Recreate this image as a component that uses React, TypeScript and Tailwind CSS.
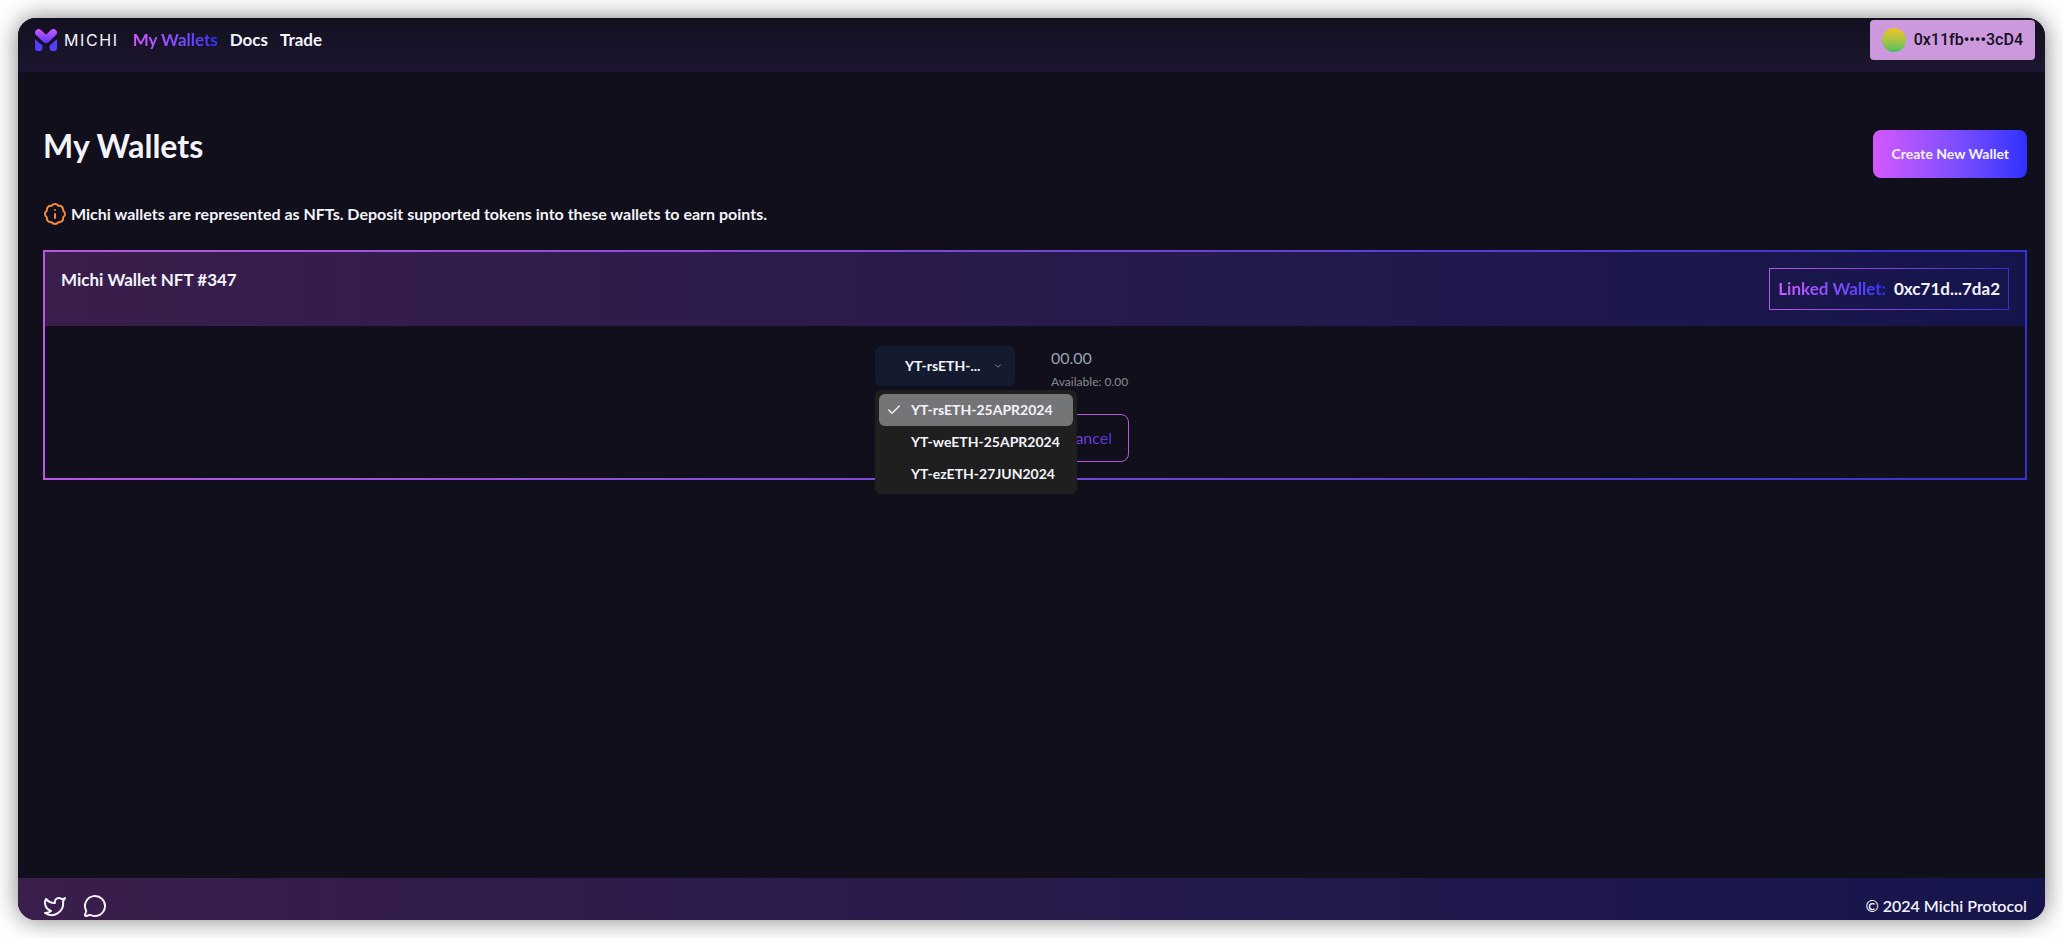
import React, { useState } from 'react';
import { BadgeInfo, Check, ChevronDown, MessageCircle, Twitter } from 'lucide-react';

interface Token {
  id: string;
  name: string;
}

const tokens: Token[] = [
  { id: 'rseth', name: 'YT-rsETH-25APR2024' },
  { id: 'weeth', name: 'YT-weETH-25APR2024' },
  { id: 'ezeth', name: 'YT-ezETH-27JUN2024' },
];

const shorten = (name: string) => `${name.slice(0, 9)}...`;

const gradientText = 'bg-linear-to-r from-[#d457ff] to-[#2d2fff] bg-clip-text text-transparent';

const Logo = () => (
  <svg width="22" height="22" viewBox="0 0 22 22" fill="none" aria-hidden="true">
    <defs>
      <linearGradient id="logo" x1="0" y1="0" x2="0" y2="22" gradientUnits="userSpaceOnUse">
        <stop stopColor="#d457ff" />
        <stop offset="0.65" stopColor="#5338ff" />
        <stop offset="1" stopColor="#5a45ff" />
      </linearGradient>
    </defs>
    <path d="M3.6 3.6 11 10.6l7.4-7" stroke="url(#logo)" strokeWidth="7" strokeLinecap="round" strokeLinejoin="round" />
    <path d="M0 10.2 7.4 16.6V18.4A3.6 3.6 0 0 1 0 18.4Z" fill="url(#logo)" />
    <path d="M22 10.2 14.6 16.6V18.4A3.6 3.6 0 0 0 22 18.4Z" fill="url(#logo)" />
  </svg>
);

const Header = () => (
  <header className="flex h-[54px] items-start justify-between bg-linear-to-b from-[#12111f] to-[#1d1530] pr-[10px] pl-[17px]">
    <div className="flex h-11 items-center">
      <a href="#" className="flex items-center gap-[7px]">
        <Logo />
        <span className="font-[Inter,sans-serif] text-base tracking-widest">MICHI</span>
      </a>
      <nav className="ml-[14px] flex gap-3 text-[17px] leading-6 font-bold">
        <a href="#" className={gradientText}>My Wallets</a>
        <a href="#">Docs</a>
        <a href="#">Trade</a>
      </nav>
    </div>
    <button className="mt-[2px] flex h-10 items-center gap-2 rounded-sm bg-[#cc99dd] px-3 font-[Roboto,sans-serif] text-base font-medium text-[#12101c]">
      <span className="size-6 rounded-full bg-linear-to-b from-[#f2c21a] to-[#3cc05a]" />
      0x11fb••••3cD4
    </button>
  </header>
);

const TokenSelect = () => {
  const [selected, setSelected] = useState('rseth');
  const [open, setOpen] = useState(true);

  return (
    <div className="relative w-[140px] text-sm font-bold">
      <select
        aria-label="Token"
        value={selected}
        onChange={e => setSelected(e.target.value)}
        className="h-10 w-full appearance-none rounded-md bg-[#151b2e] pl-[30px] outline-none"
      >
        {tokens.map(token => (
          <option key={token.id} value={token.id}>{shorten(token.name)}</option>
        ))}
      </select>
      <ChevronDown className="pointer-events-none absolute top-[15px] right-3 size-[10px] text-gray-400" />
      {open && (
        <ul className="absolute top-11 left-0 z-10 w-[202px] rounded-md bg-[#1f1f1f] p-1">
          {tokens.map(token => (
            <li key={token.id}>
              <button
                onClick={() => {
                  setSelected(token.id);
                  setOpen(false);
                }}
                className={`flex h-8 w-full items-center rounded-md whitespace-nowrap ${token.id === selected ? 'bg-[#747576]' : ''}`}
              >
                <span className="flex w-8 shrink-0 justify-center pr-[2px]">
                  {token.id === selected && <Check className="size-4" />}
                </span>
                {token.name}
              </button>
            </li>
          ))}
        </ul>
      )}
    </div>
  );
};

const WalletCard = () => (
  <section className="mt-6 border-2 [border-image:linear-gradient(to_right,#b958e0,#3233cc)_1]">
    <div className="flex h-[74px] items-start justify-between bg-linear-to-r from-[#3a1e4b] to-[#15154c] p-4 text-[17px] leading-6 font-bold">
      <h2>Michi Wallet NFT #347</h2>
      <div className="flex h-[42px] items-center gap-2 border px-2 [border-image:linear-gradient(to_right,#b958e0,#3233cc)_1]">
        <span className={gradientText}>Linked Wallet:</span>
        <span>0xc71d...7da2</span>
      </div>
    </div>
    <div className="flex flex-col items-center pt-5 pb-4">
      <div className="flex h-11 w-80 gap-9">
        <TokenSelect />
        <div className="flex min-w-0 flex-1 flex-col text-gray-400">
          <input aria-label="Amount" placeholder="00.00" className="h-6 w-full bg-transparent outline-none placeholder:text-gray-400" />
          <span className="text-xs leading-6 font-medium text-[#808088]">Available: 0.00</span>
        </div>
      </div>
      <div className="mt-6 flex w-[188px] justify-end">
        <button className="h-12 rounded-lg border border-[#b958e0] px-4">
          <span className="bg-linear-to-r from-[#8045e8] to-[#5a35e8] bg-clip-text text-transparent">Cancel</span>
        </button>
      </div>
    </div>
  </section>
);

const Footer = () => (
  <footer className="flex h-[42px] items-start justify-between bg-linear-to-r from-[#3a1e4b] to-[#15154c] pt-4 pr-[18px] pl-[25px] font-semibold">
    <div className="flex gap-4">
      <a href="#" aria-label="Twitter"><Twitter /></a>
      <a href="#" aria-label="Chat"><MessageCircle /></a>
    </div>
    <p>© 2024 Michi Protocol</p>
  </footer>
);

export default function App() {
  return (
    <div className="flex min-h-screen bg-white p-[18px] font-[Lato,sans-serif] text-[#f3f3fa]">
      <div className="flex flex-1 flex-col overflow-hidden rounded-[18px] bg-[#100f1b] shadow-[0_0_24px_rgba(0,0,0,0.5)]">
        <Header />
        <main className="flex-1 pt-[58px] pr-[18px] pl-[25px]">
          <div className="flex items-start justify-between">
            <h1 className="text-[32px] leading-8 font-bold">My Wallets</h1>
            <button className="h-12 rounded-lg bg-linear-to-r from-[#d457ff] to-[#2d2fff] px-[18px] text-sm font-bold">
              Create New Wallet
            </button>
          </div>
          <div className="mt-6 flex items-center gap-1 font-bold">
            <BadgeInfo className="text-[#f08a3c]" />
            Michi wallets are represented as NFTs. Deposit supported tokens into these wallets to earn points.
          </div>
          <WalletCard />
        </main>
        <Footer />
      </div>
    </div>
  );
}
